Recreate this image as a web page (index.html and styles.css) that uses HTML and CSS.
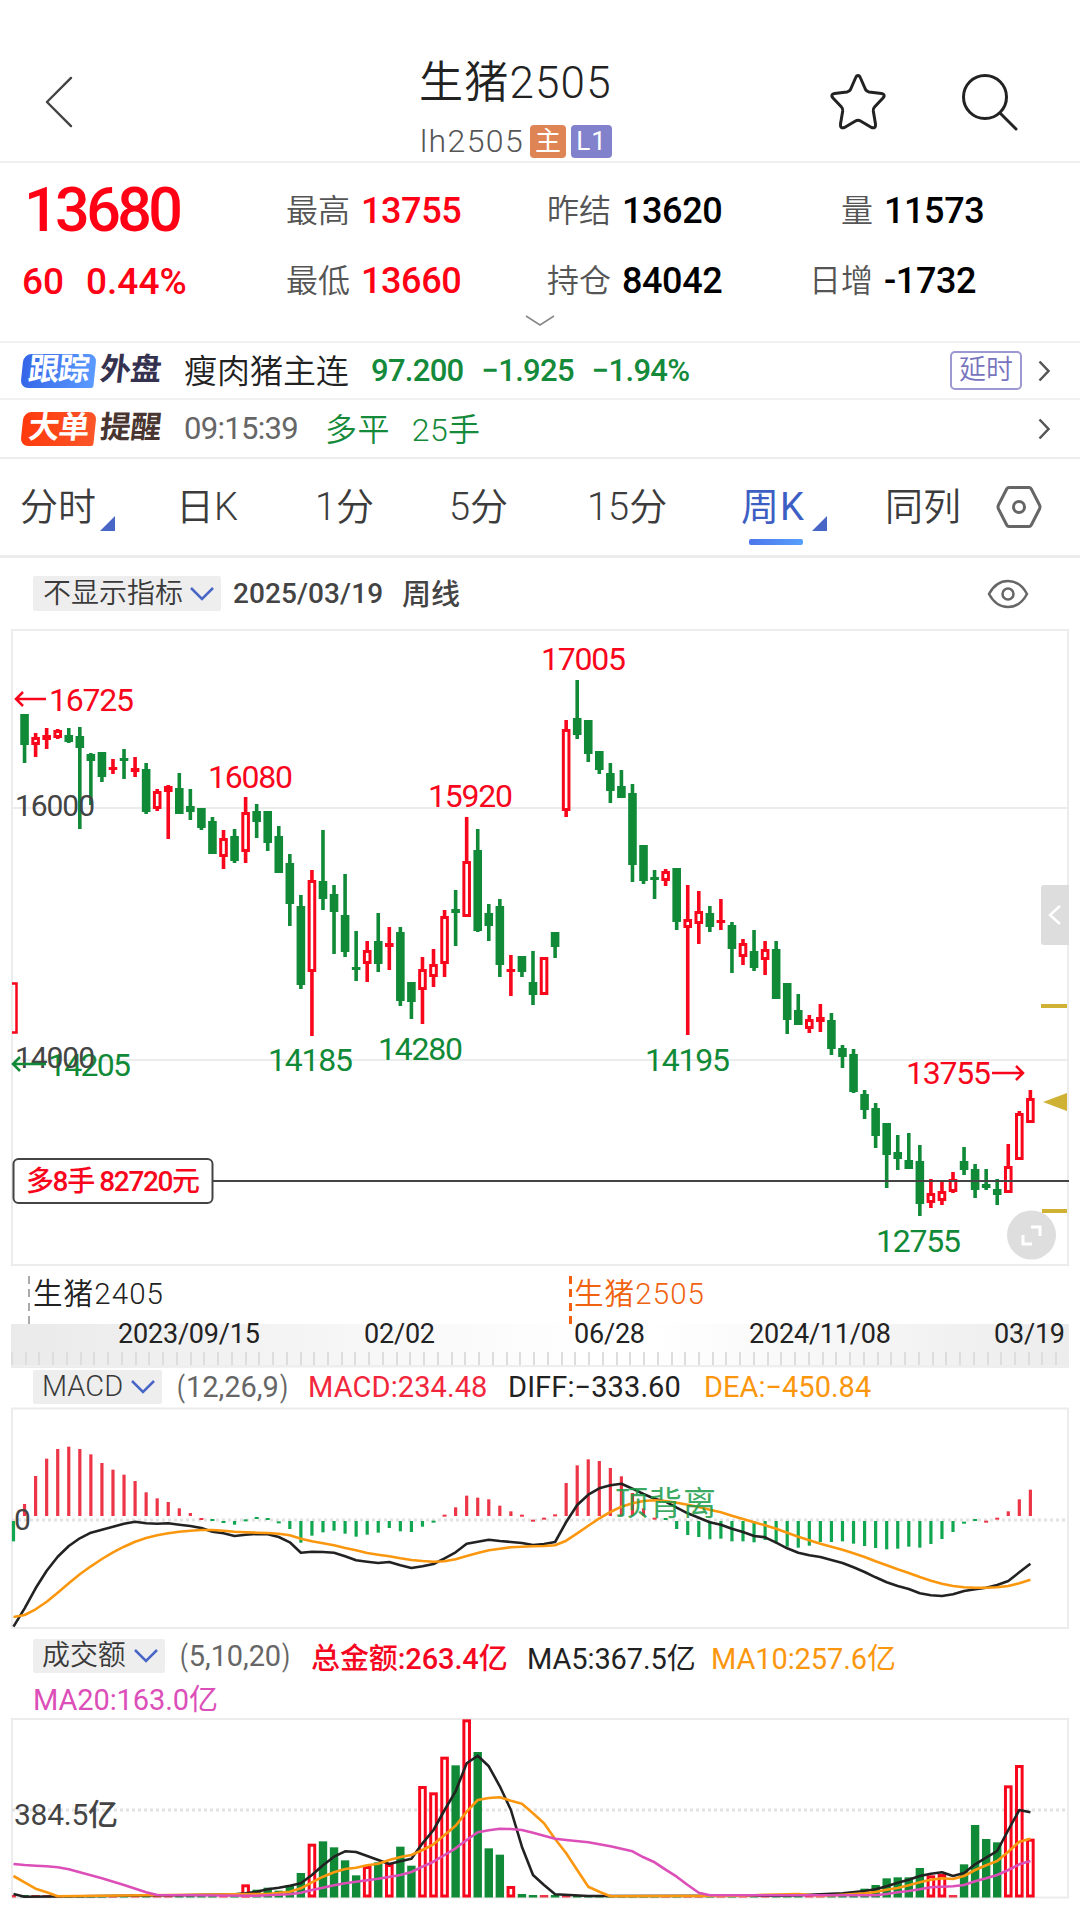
FILE: index.html
```html
<!DOCTYPE html>
<html lang="zh-CN">
<head>
    <meta charset="UTF-8">
    <meta name="viewport" content="width=device-width, initial-scale=1.0">
    <title>生猪2505</title>
    <link rel="stylesheet" href="styles.css">
</head>
<body>

<header class="header">
    <svg class="icon-back" viewBox="0 0 30 54"><path d="M28 2 3 27 28 52"/></svg>
    <div class="title-box">
        <h1>生猪2505</h1>
        <div class="code"><span>lh2505</span><b class="badge main">主</b><b class="badge level">L1</b></div>
    </div>
    <svg class="icon-star" viewBox="0 0 60 60"><path d="M30 3.500Q31.500 3.500 32.500 6L37.500 17.500Q38.500 19.500 41 20L53.500 21.500Q58 22.500 55 26L46.500 35Q45 36.500 45.300 39L47.500 52Q48 57 43.500 55.500L32.500 49Q30 47.500 27.500 49L16.500 55.500Q12 57 12.500 52L14.700 39Q15 36.500 13.500 35L5 26Q2 22.500 6.500 21.500L19 20Q21.500 19.500 22.500 17.500L27.500 6Q28.500 3.500 30 3.500Z"/></svg>
    <svg class="icon-search" viewBox="0 0 60 60"><circle cx="25" cy="25" r="21.500"/><path d="M40 41 56 57"/></svg>
</header>

<section class="quote">
    <div class="price">13680</div>
    <div class="cell"><i>最高</i><b class="up">13755</b></div>
    <div class="cell"><i>昨结</i><b>13620</b></div>
    <div class="cell right"><i>量</i><b>11573</b></div>
    <div class="change"><span>60</span><span>0.44%</span></div>
    <div class="cell"><i>最低</i><b class="up">13660</b></div>
    <div class="cell"><i>持仓</i><b>84042</b></div>
    <div class="cell right"><i>日增</i><b>-1732</b></div>
    <svg class="expand" viewBox="0 0 30 12"><path d="M1 1 15 10 29 1"/></svg>
</section>

<div class="notice first">
    <div class="tag blue"><em>跟踪</em><span>外盘</span></div>
    <div class="name">瘦肉猪主连</div>
    <div class="nums"><span>97.200</span><span>−1.925</span><span>−1.94%</span></div>
    <div class="delay">延时</div>
    <svg class="arrow" viewBox="0 0 12 22"><path d="M1.500 1.500 10.500 11 1.500 20.500"/></svg>
</div>
<div class="notice second">
    <div class="tag red"><em>大单</em><span>提醒</span></div>
    <div class="time">09:15:39</div>
    <div class="deal"><span>多平</span><span>25手</span></div>
    <svg class="arrow" viewBox="0 0 12 22"><path d="M1.500 1.500 10.500 11 1.500 20.500"/></svg>
</div>

<nav class="tabs">
    <span class="more">分时</span>
    <span>日K</span>
    <span>1分</span>
    <span>5分</span>
    <span>15分</span>
    <span class="more active">周K</span>
    <span>同列</span>
    <svg class="icon-set" viewBox="0 0 46 44"><path d="M13 2.500H33Q34.500 2.500 35.300 4L43.500 20Q44.500 22 43.500 24L35.300 40Q34.500 41.500 33 41.500H13Q11.500 41.500 10.700 40L2.500 24Q1.500 22 2.500 20L10.700 4Q11.500 2.500 13 2.500Z"/><circle cx="23" cy="22" r="5.500"/></svg>
</nav>

<div class="toolbar">
    <div class="select">不显示指标<svg viewBox="0 0 24 14"><path d="M1 1 12 12 23 1"/></svg></div>
    <span class="date">2025/03/19</span>
    <span class="cycle">周线</span>
    <svg class="icon-eye" viewBox="0 0 42 30"><path d="M2 15Q9 2 21 2T40 15Q33 28 21 28T2 15Z"/><circle cx="21" cy="15" r="5.500"/></svg>
</div>

<svg class="chart kline" id="kline" viewBox="0 9 1080 643"></svg>

<div class="contracts">
    <span>生猪2405</span>
    <span class="current">生猪2505</span>
</div>
<div class="timeline">
    <span>2023/09/15</span>
    <span>02/02</span>
    <span>06/28</span>
    <span>2024/11/08</span>
    <span>03/19</span>
</div>

<div class="indicator">
    <div class="select">MACD<svg viewBox="0 0 24 14"><path d="M1 1 12 12 23 1"/></svg></div>
    <span class="param"><u>(</u>12,26,9<u>)</u></span>
    <span class="macd">MACD:234.48</span>
    <span class="diff">DIFF:−333.60</span>
    <span class="dea">DEA:−450.84</span>
</div>
<svg class="chart macd-chart" id="macd" viewBox="0 0 1080 222"></svg>

<div class="indicator volume">
    <div class="select">成交额<svg viewBox="0 0 24 14"><path d="M1 1 12 12 23 1"/></svg></div>
    <span class="param"><u>(</u>5,10,20<u>)</u></span>
    <span class="total">总金额:263.4亿</span>
    <span class="ma5">MA5:367.5亿</span>
    <span class="ma10">MA10:257.6亿</span>
    <span class="ma20">MA20:163.0亿</span>
</div>
<svg class="chart vol-chart" id="volume" viewBox="0 0 1080 182"></svg>

<script src="chart.js"></script>
</body>
</html>
```

FILE: styles.css
```css
* { margin: 0; padding: 0; box-sizing: border-box; }
body { width: 1080px; height: 1927px; overflow: hidden; background: #fff; color: #222; font-family: Roboto, "Noto Sans CJK SC", sans-serif; }
svg { display: block; fill: none; flex-shrink: 0; }
i, em { font-style: normal; }
u { text-decoration: none; }

/* Header */
.header { height: 163px; padding: 57px 60px 0 44px; display: flex; border-bottom: 2px solid #efefef; }
.header svg { stroke: #222; stroke-width: 3; stroke-linejoin: round; stroke-linecap: round; }
.icon-back { width: 29px; height: 52px; margin-top: 19px; }
.header .icon-back { stroke: #444; stroke-width: 2.5; }
.title-box { margin-left: 346px; width: 202px; }
.title-box h1 { font-size: 44px; font-weight: 350; line-height: 53px; letter-spacing: 1.2px; white-space: nowrap; }
.code { display: flex; align-items: center; height: 36px; margin-top: 13px; font-size: 32px; font-weight: 350; color: #555; }
.code span { width: 111px; padding-left: 1px; white-space: nowrap; letter-spacing: 1.4px; }
.badge { height: 33px; border-radius: 4px; color: #fff; font-size: 26px; line-height: 32px; font-weight: 400; text-align: center; }
.main { width: 36px; background: #df8455; }
.level { width: 41px; margin-left: 5px; background: #8182cb; letter-spacing: 1px; }
.icon-star { width: 60px; height: 60px; margin: 15px 0 0 207px; }
.icon-search { width: 60px; height: 60px; margin: 15px 0 0 72px; }

/* Quote */
.quote { position: relative; height: 180px; padding-top: 13px; display: grid; grid-template-columns: 286px 261px 264px 268px; grid-template-rows: 70px 70px; align-items: center; border-bottom: 2px solid #f1f1f1; font-weight: 500; white-space: nowrap; }
.price { padding: 0 0 2px 24px; font-size: 61px; color: #ff0014; letter-spacing: -3.6px; }
.change { padding-left: 22px; display: flex; gap: 22px; font-size: 37px; letter-spacing: 0; color: #ff0014; }
.cell { display: flex; align-items: center; color: #000; }
.cell i { width: 75px; font-size: 32px; font-weight: 350; color: #555; line-height: 46px; }
.cell b { font-size: 36px; font-weight: 500; letter-spacing: -0.4px; }
.cell.right i { width: 73px; padding-right: 11px; display: flex; justify-content: flex-end; }
.cell b.up { color: #ff0014; }
.expand { position: absolute; left: 525px; bottom: 14px; width: 30px; height: 12px; stroke: #888; stroke-width: 1.5; }

/* Notices */
.notice { display: flex; align-items: center; padding: 0 30px 0 22px; font-size: 32px; color: #148a3a; white-space: nowrap; }
.first { height: 57px; border-bottom: 2px solid #f1f1f1; }
.second { height: 59px; border-bottom: 2px solid #ececec; }
.tag { width: 162px; display: flex; align-items: center; font-size: 31px; font-weight: 700; }
.tag em, .tag span { transform: skewX(-6deg); height: 34px; line-height: 32px; }
.tag em { width: 73px; text-align: center; border-radius: 8px 8px 2px 8px; color: #fff; letter-spacing: -1px; }
.tag span { margin-left: 5px; letter-spacing: -0.5px; }
.blue em { background: linear-gradient(90deg, #3565e8, #5b9bff); }
.blue span { color: #353250; }
.red em { background: linear-gradient(90deg, #ff3a0c, #fb5528); }
.red span { color: #4a3630; }
.name { width: 187px; padding-bottom: 3px; font-size: 33px; font-weight: 350; color: #222; }
.nums { display: flex; gap: 18px; font-size: 31px; font-weight: 500; letter-spacing: -0.7px; }
.delay { margin-left: auto; width: 72px; height: 39px; border: 2px solid #9b98d2; border-radius: 5px; font-size: 27px; font-weight: 350; line-height: 34px; text-align: center; color: #7774bd; }
.arrow { width: 12px; height: 22px; margin-left: auto; stroke: #555; stroke-width: 2.5; }
.delay + .arrow { margin-left: 16px; }
.time { width: 141px; font-size: 31px; color: #666; letter-spacing: -0.7px; }
.deal { display: flex; gap: 22px; padding-bottom: 4px; font-weight: 350; letter-spacing: 0.4px; }

/* Tabs */
.tabs { height: 99px; padding-left: 20px; display: grid; grid-template-columns: 156px 139px 134px 138px 154px 144px 111px 48px; align-items: center; border-bottom: 3px solid #ececec; font-size: 38px; font-weight: 350; color: #3c3c3c; line-height: 97px; }
.tabs span { position: relative; height: 98px; white-space: nowrap; }
.more::after { content: ""; position: absolute; left: 80px; top: 57px; border-left: 15px solid transparent; border-bottom: 15px solid #4766c5; }
.tabs .active { color: #3d5fc4; font-weight: 400; letter-spacing: 1px; }
.more.active::after { left: 71px; }
.active::before { content: ""; position: absolute; left: 8px; top: 80px; width: 54px; height: 6px; border-radius: 2px; background: linear-gradient(90deg, #4c76ec, #57a0fb); }
.icon-set { width: 46px; height: 44px; margin-bottom: 2px; stroke: #666; stroke-width: 3; }

/* Toolbar */
.toolbar { height: 71px; padding: 0 51px 0 33px; display: flex; align-items: center; font-size: 28px; }
.select { height: 35px; padding: 0 7px 0 10px; display: flex; align-items: center; justify-content: space-between; background: #eee; border-radius: 2px; color: #3a3a3a; font-size: 28px; font-weight: 350; line-height: 33px; white-space: nowrap; }
.select svg { width: 24px; height: 14px; stroke: #4766c5; stroke-width: 2.5; }
.toolbar .select { width: 188px; }
.date { width: 169px; margin-left: 12px; color: #444; font-weight: 500; letter-spacing: 0.1px; }
.cycle { padding-bottom: 3px; color: #444; font-size: 29px; font-weight: 500; }
.icon-eye { width: 42px; height: 30px; margin-left: auto; stroke: #666; stroke-width: 2.5; }

/* Charts */
.chart { width: 1080px; }
.kline { height: 643px; }
.macd-chart { height: 222px; }
.vol-chart { height: 182px; }
.chart text { font-size: 32px; font-weight: 450; font-family: Roboto, "Noto Sans CJK SC", sans-serif; }
.frame { stroke: #ececec; stroke-width: 2; }
.grid { stroke: #ececec; stroke-width: 2; }
.dotted { stroke: #e2e2e2; stroke-width: 3; stroke-dasharray: 3 3; }
.kline .rise { fill: #f8061c; }
.kline .fall { fill: #118a38; }
.hollow { stroke: #f8061c; stroke-width: 3; fill: #fff; }
.solid { fill: #118a38; }
.chart .axis { fill: #444; font-size: 30px; }
.chart .note { font-size: 28px; font-weight: 500; }
.gold { fill: #cfb234; }
.position { stroke: #444; stroke-width: 2; }
.arrow-rise { stroke: #f8061c; stroke-width: 2.5; }
.arrow-fall { stroke: #118a38; stroke-width: 2.5; }
.bar-up { fill: #ec3547; }
.bar-down { fill: #11a650; }
.line-dark, .line-orange, .line-pink { stroke: #222; stroke-width: 2.6; stroke-linejoin: round; }
.line-orange { stroke: #fa970f; }
.line-pink { stroke: #dc4fb8; }
.macd-chart .signal { fill: #1b9c48; font-size: 33px; font-weight: 400; opacity: 0.85; }

/* Contracts and timeline */
.contracts { height: 52px; padding: 4px 0 0 28px; display: grid; grid-template-columns: 541px 1fr; font-size: 29.5px; font-weight: 350; line-height: 37px; letter-spacing: 1.1px; color: #222; }
.contracts span { height: 48px; padding-left: 5px; background: repeating-linear-gradient(180deg, #aaa 0 8px, transparent 8px 13.5px) left / 2px 100% no-repeat; }
.contracts .current { color: #f0620f; background-image: repeating-linear-gradient(180deg, #f0620f 0 8px, transparent 8px 13.5px); background-size: 3px 100%; }
.timeline { height: 44px; margin: 0 11px; padding-left: 107px; display: grid; grid-template-columns: 246px 210px 175px 245px 70px; font-size: 27px; font-weight: 450; line-height: 20px; letter-spacing: -0.2px; color: #222; background: linear-gradient(#eee, #eee) 0 41px / 100% 2px no-repeat, repeating-linear-gradient(90deg, #ddd 0 2px, transparent 2px 13.74px) 0 28px / 100% 15px no-repeat, linear-gradient(90deg, #eaeaea, #fff 55%, #fff 60%, #ececec); }

/* Indicator headers */
.indicator { height: 39px; padding-bottom: 2px; display: grid; grid-template-columns: 129px 132px 200px 196px 200px; padding-left: 33px; align-items: center; font-size: 29px; white-space: nowrap; }
.indicator .select { height: 34px; font-size: 29px; padding-left: 9px; }
.param { padding-left: 14px; color: #666; }
.param u { display: inline-block; transform: scaleX(0.8); }
.macd { margin-left: 14px; color: #f2273c; letter-spacing: 0.1px; }
.diff { margin-left: 14px; color: #222; letter-spacing: 0.1px; }
.dea, .ma10 { margin-left: 14px; color: #fa970f; }
.volume { height: 88px; padding-top: 6px; padding-bottom: 0; grid-template-columns: 132px 132px 216px 184px 200px; grid-template-rows: 41px 41px; align-content: start; letter-spacing: -0.1px; }
.volume .select { font-size: 28px; }
.total { margin-left: 14px; color: #f5081f; font-weight: 500; }
.ma5 { margin-left: 14px; color: #222; }
.ma20 { grid-column: 1 / 4; color: #dc4fb8; }
```

FILE: chart.js
```js
const STEP = 11.053;
const X0 = 13.5;
const px = i => X0 + i * STEP;

// high, body top, body bottom, low, rising
const candles = [
    [362,362,414,414,1],[94,94,125,143,0],[113,117,125,137,1],[108,115,120,129,1],[109,110,118,119,1],[108,115,122,123,0],
    [107,116,128,209,0],[133,134,141,185,0],[132,132,157,162,0],[139,147,150,154,1],[129,138,141,159,0],[137,148,152,157,1],
    [143,149,192,194,0],[169,171,189,191,1],[165,166,172,219,1],[153,168,194,194,0],[169,186,192,200,0],[188,188,208,210,0],
    [197,201,234,234,0],[210,218,237,249,1],[209,216,241,243,0],[177,192,232,243,1],[184,191,202,218,0],[191,191,223,231,0],
    [206,216,253,253,0],[234,243,284,306,0],[275,286,365,369,0],[250,260,352,416,1],[210,261,279,290,0],[265,274,292,334,0],
    [254,295,332,337,0],[311,347,350,361,0],[321,330,344,362,1],[293,321,344,352,0],[307,323,327,350,1],[307,312,381,386,0],
    [362,362,382,399,0],[337,349,370,404,1],[329,344,357,367,1],[290,296,344,357,1],[270,289,293,326,0],[197,241,297,297,1],
    [209,230,311,312,0],[284,293,306,321,0],[279,286,345,357,0],[335,349,352,376,1],[336,336,352,357,0],[331,362,375,385,0],
    [337,337,375,375,1],[312,312,327,338,0],[100,109,191,197,1],[60,98,115,119,0],[100,100,134,142,0],[131,131,150,154,0],
    [143,153,171,183,0],[150,166,178,178,0],[164,173,245,262,0],[225,225,261,264,0],[250,257,260,279,0],[249,251,261,266,1],
    [248,248,302,310,0],[265,299,308,415,1],[271,291,304,324,1],[286,293,307,312,0],[279,300,303,310,1],[302,305,329,353,0],
    [319,323,337,345,1],[310,331,348,351,0],[321,329,340,355,1],[321,329,379,379,0],[363,363,400,414,0],[374,390,405,405,0],
    [395,399,409,413,1],[384,397,402,412,1],[393,400,429,435,0],[425,428,437,448,0],[429,434,472,473,0],[470,474,490,499,0],
    [483,488,516,528,0],[503,503,535,568,0],[515,532,539,550,0],[513,540,549,549,0],[525,541,584,596,0],[559,573,583,588,1],
    [561,571,581,585,1],[552,559,572,573,1],[527,541,550,555,0],[544,549,570,578,0],[549,564,568,570,0],[559,569,575,585,0],
    [524,546,573,573,1],[491,493,540,540,1],[470,478,503,503,1]
];

function rect(x, y, w, h, cls) {
    return `<rect x="${x}" y="${y}" width="${w}" height="${h}" class="${cls}"/>`;
}

function label(x, y, str, w, cls) {
    return `<text x="${x}" y="${y}" textLength="${w}" class="${cls}">${str}</text>`;
}

function drawKline() {
    let s = rect(12, 10, 1056, 635, "frame");
    s += '<path class="grid" d="M12 188H1068M12 440H1068"/>';
    candles.forEach(([high, top, bottom, low, up], i) => {
        const x = px(i);
        if (i === 0) {
            s += '<path d="M12 363.5H16.500V412.500H12" class="arrow-rise"/>';
            return;
        }
        s += rect(x - 1.8, high, 3.6, low - high, up ? "rise" : "fall");
        if (up && bottom - top > 7) {
            s += rect(x - 2.8, top + 1.5, 5.6, bottom - top - 3, "hollow");
        } else {
            s += rect(x - 4.3, top, 8.6, bottom - top, up ? "rise" : "fall");
        }
    });
    s += label(15, 196, "16000", 80, "axis") + label(48, 456, "14205", 83, "fall") + label(15, 448, "14000", 80, "axis");
    s += label(49, 91, "16725", 85, "rise") + label(208, 168, "16080", 85, "rise") + label(428, 187, "15920", 85, "rise");
    s += label(541, 50, "17005", 85, "rise") + label(906, 464, "13755", 85, "rise");
    s += label(268, 451, "14185", 85, "fall") + label(378, 440, "14280", 85, "fall") + label(645, 451, "14195", 85, "fall") + label(876, 632, "12755", 85, "fall");
    s += '<path class="arrow-rise" d="M46 79H16M23 72 16 79 23 86M992 453H1023M1016 446 1023 453 1016 460"/>';
    s += '<path class="arrow-fall" d="M46 444H13M20 437 13 444 20 451"/>';
    s += '<path class="position" d="M213 561H1069"/><rect class="position" x="13.500" y="539" width="199" height="44" rx="5" fill="#fff"/>';
    s += '<text x="26" y="571" textLength="174" class="rise note">多8手 82720元</text>';
    s += '<path class="gold" d="M1041 384H1067V388H1041ZM1042 589H1067V593H1042ZM1043 482 1067 473V491Z"/>';
    s += '<path d="M1069 265H1044Q1041 265 1041 268V322Q1041 325 1044 325H1069Z" fill="#ddd"/><path d="M1060 286 1050 295 1060 304" stroke="#fff" stroke-width="2.500"/>';
    s += '<circle cx="1031.500" cy="615" r="24.500" fill="#dedede"/><path d="M1031 607H1040V616M1023 615V624H1032" stroke="#fff" stroke-width="3"/>';
    document.getElementById("kline").innerHTML = s;
}

// turns {index: y} into a polyline, y is in thirds of a pixel
function line(points, offset, cls) {
    const d = Object.keys(points).map(i => px(+i).toFixed(1) + "," + (points[i] / 3 + offset).toFixed(1)).join(" ");
    return `<polyline points="${d}" class="${cls}"/>`;
}

function drawMacd() {
    const off = -37;
    const bars = {
        0:-61,1:36,2:120,3:172,4:201,5:208,6:201,7:185,8:159,9:139,10:124,11:105,12:71,13:53,14:42,15:23,16:9,20:-11,
        25:-24,26:-65,27:-44,28:-34,29:-29,30:-38,31:-47,32:-41,33:-35,34:-21,35:-31,36:-33,37:-17,40:26,41:61,42:55,43:50,44:31,45:14,
        50:99,51:152,52:170,53:165,54:144,55:119,56:69,57:23,60:-24,61:-42,62:-48,63:-55,64:-53,65:-61,66:-61,67:-64,68:-57,69:-67,
        70:-77,71:-80,72:-74,73:-63,74:-63,75:-61,76:-68,77:-75,78:-81,79:-85,80:-83,81:-77,82:-80,83:-69,84:-54,85:-33,90:14,91:50,92:79
    };
    const dots = [[17,447,1],[18,450,0],[19,456,0],[21,451,0],[22,444,0],[23,447,0],[24,457,0],[38,455,0],[39,437,1],[46,437,1],[47,452,1],
        [48,446,1],[49,436,1],[58,446,1],[59,447,0],[86,458,0],[87,450,0],[88,455,1],[89,446,1]];
    const diff = [770,715,655,602,560,528,505,488,479,470,461,455,460,461,460,464,468,474,485,490,498,494,492,493,501,517,548,545,546,548,559,571,575,579,576,586,594,589,582,565,547,521,515,509,513,516,519,525,522,516,456,405,374,355,346,341,356,372,386,395,413,430,443,457,464,476,486,498,502,518,535,548,556,561,570,579,592,606,622,637,648,657,670,676,678,673,663,658,653,645,633,607,581];
    const dea = [741,735,718,695,668,640,613,589,567,547,530,515,504,496,490,485,482,480,480,482,485,487,488,489,491,496,506,514,520,526,534,541,549,554,559,565,570,573,575,574,568,558,549,541,536,532,530,529,528,526,512,490,467,445,426,410,400,393,391,393,398,404,411,419,427,437,447,457,466,476,488,500,511,521,530,539,550,561,574,586,598,609,621,632,641,648,652,653,653,652,648,640,629];

    let s = rect(12, 1.5, 1056, 219.5, "frame") + '<path class="dotted" d="M12 113H1068"/>';
    for (const i in bars) {
        const h = Math.abs(bars[i]) / 3;
        s += bars[i] > 0 ? rect(px(+i) - 1.6, 109 - h, 3.2, h, "bar-up") : rect(px(+i) - 1.6, 114, 3.2, h, "bar-down");
    }
    dots.forEach(([i, y, up]) => s += rect(px(i) - 2, y / 3 + off - 1, 4, 2, up ? "bar-up" : "bar-down"));
    s += label(14, 123, "0", 16, "axis");
    s += line(diff, off, "line-dark") + line(dea, off, "line-orange");
    s += '<text x="615" y="108" textLength="101" class="signal">顶背离</text>';
    document.getElementById("macd").innerHTML = s;
}

function drawVolume() {
    const off = -87;
    const base = 180.5;
    const tops = {
        21:763,22:779,23:773,24:782,25:765,26:729,27:641,28:634,29:652,30:691,31:736,32:708,33:697,34:702,35:650,36:707,
        37:468,38:487,39:380,40:406,41:268,42:366,43:655,44:674,45:768,46:792,75:790,76:786,77:776,78:765,79:745,80:742,81:742,82:714,
        83:736,84:732,86:703,87:585,88:627,89:637,90:466,91:405,92:626
    };
    const ma5 = {0:792,1:800,6:799,10:797,15:796,20:793,21:790,22:785,23:778,24:773,25:767,26:760,27:735,28:706,29:680,30:664,31:666,32:678,33:690,34:702,35:694,36:686,37:640,38:600,39:540,40:484,41:400,42:377,43:409,44:469,45:540,46:650,47:735,48:765,49:793,52:798,70:797,73:793,75:790,77:783,78:778,79:769,80:758,81:749,82:738,83:731,84:727,85:738,86:729,87:703,88:683,89:663,90:600,91:540,92:547};
    const ma10 = {0:738,1:757,2:776,3:787,4:799,20:793,23:792,25:785,26:775,27:757,28:740,29:727,30:717,31:713,32:706,33:701,34:690,35:681,36:675,37:660,38:643,39:615,40:587,41:545,42:510,43:504,44:502,45:512,46:521,47:550,48:580,49:627,50:670,51:720,52:770,53:785,54:799,66:797,68:794,71:792,73:797,75:794,77:790,78:786,79:779,80:774,81:766,82:757,83:749,84:745,85:747,86:738,87:720,88:706,89:693,90:665,91:635,92:626};
    const ma20 = {0:702,1:705,2:707,3:709,4:712,5:718,6:727,8:745,10:765,12:787,13:795,22:797,25:793,26:788,27:780,28:773,29:766,30:760,31:755,33:746,35:735,36:726,37:710,38:695,39:675,40:655,41:630,42:607,43:601,44:596,45:597,46:600,47:608,48:617,49:626,50:630,52:637,54:649,56:664,57:682,58:697,59:719,60:740,61:765,62:788,63:796,75:796,78:796,79:792,80:787,81:783,82:778,83:772,84:770,85:769,86:765,87:754,88:745,89:735,90:720,91:703,92:693};

    let s = rect(12, 2, 1056, 178.5, "frame") + '<path class="dotted" d="M12 93H1068"/>';
    candles.forEach((c, i) => {
        const y = (tops[i] || 795) / 3 + off;
        if (i === 0) {
            s += rect(12, y, 4, base - y, "bar-up");
        } else if (!c[4]) {
            s += rect(px(i) - 4.2, y, 8.4, base - y, "solid");
        } else if (base - y > 6) {
            s += rect(px(i) - 2.8, y + 1.5, 5.6, base - y - 3, "hollow");
        } else {
            s += rect(px(i) - 4.2, y, 8.4, base - y, "bar-up");
        }
    });
    s += line(ma5, off, "line-dark") + line(ma10, off, "line-orange") + line(ma20, off, "line-pink");
    s += label(14, 108, "384.5亿", 104, "axis");
    document.getElementById("volume").innerHTML = s;
}

drawKline();
drawMacd();
drawVolume();
```
